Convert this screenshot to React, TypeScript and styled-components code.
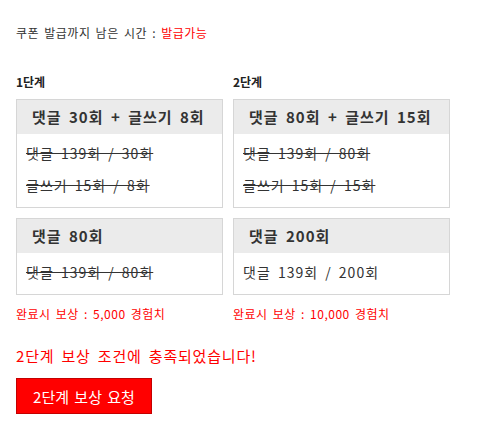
import styled, { createGlobalStyle } from "styled-components";

const GlobalStyle = createGlobalStyle`
  html, body {
    margin: 0;
    padding: 0;
    background: #fff;
  }
  body {
    font-family: "Noto Sans CJK KR", "Noto Sans", sans-serif;
    color: #333;
  }
`;

// ─── Styled components ────────────────────────────────────────────────────────

const Page = styled.main`
  padding: 25px 16px 20px;
`;

const Timer = styled.p`
  margin: 0;
  font-size: 12px;
  line-height: 16px;
  letter-spacing: 0.5px;
  word-spacing: 2px;
  color: #333;
`;

const Red = styled.span`
  color: #ff0000;
`;

const Steps = styled.div`
  display: grid;
  grid-template-columns: 207px 217px;
  column-gap: 10px;
  margin-top: 33px;
`;

const Step = styled.section`
  display: flex;
  flex-direction: column;
`;

const StepLabel = styled.h3`
  margin: 0 0 9px;
  font-size: 12px;
  line-height: 16px;
  font-weight: 700;
  color: #222;
`;

const Box = styled.div`
  border: 1px solid #d6d6d6;
  background: #fff;
  & + & { margin-top: 10px; }
`;

const BoxHead = styled.div`
  background: #ebebeb;
  height: 34px;
  line-height: 34px;
  padding: 0 15px;
  font-size: 15px;
  font-weight: 700;
  letter-spacing: 1px;
  word-spacing: 3px;
  color: #333;
  white-space: nowrap;
`;

const BoxBody = styled.div`
  padding: 3px 9px 6px;
`;

const Line = styled.p<{ $done?: boolean }>`
  margin: 0;
  font-size: 14px;
  line-height: 32px;
  letter-spacing: 1px;
  word-spacing: 3px;
  color: #333;
  white-space: nowrap;
  text-decoration: ${p => (p.$done ? "line-through" : "none")};
`;

const Reward = styled.p`
  margin: 11px 0 0;
  font-size: 12px;
  line-height: 16px;
  letter-spacing: 0.5px;
  word-spacing: 2px;
  color: #ff0000;
`;

const Notice = styled.p`
  margin: 24px 0 0;
  font-size: 15px;
  line-height: 20px;
  letter-spacing: 0.8px;
  word-spacing: 3px;
  color: #ff0000;
`;

const RequestBtn = styled.button`
  margin-top: 12px;
  width: 136px;
  height: 36px;
  padding: 0;
  border: 1px solid #c40000;
  background: #ff0000;
  color: #fff;
  font-family: "Noto Sans CJK KR", "Noto Sans", sans-serif;
  font-size: 15px;
  font-weight: 400;
  letter-spacing: 0;
  word-spacing: 2px;
  cursor: pointer;
`;

// ─── Data ─────────────────────────────────────────────────────────────────────

type Mission = { title: string; lines: { text: string; done: boolean }[] };

const steps: { label: string; reward: string; missions: Mission[] }[] = [
  {
    label: "1단계",
    reward: "완료시 보상 : 5,000 경험치",
    missions: [
      {
        title: "댓글 30회 + 글쓰기 8회",
        lines: [
          { text: "댓글 139회 / 30회", done: true },
          { text: "글쓰기 15회 / 8회", done: true },
        ],
      },
      {
        title: "댓글 80회",
        lines: [{ text: "댓글 139회 / 80회", done: true }],
      },
    ],
  },
  {
    label: "2단계",
    reward: "완료시 보상 : 10,000 경험치",
    missions: [
      {
        title: "댓글 80회 + 글쓰기 15회",
        lines: [
          { text: "댓글 139회 / 80회", done: true },
          { text: "글쓰기 15회 / 15회", done: true },
        ],
      },
      {
        title: "댓글 200회",
        lines: [{ text: "댓글 139회 / 200회", done: false }],
      },
    ],
  },
];

export default function App() {
  return (
    <>
      <GlobalStyle />
      <Page>
        <Timer>
          쿠폰 발급까지 남은 시간 : <Red>발급가능</Red>
        </Timer>

        <Steps>
          {steps.map(step => (
            <Step key={step.label}>
              <StepLabel>{step.label}</StepLabel>
              {step.missions.map(m => (
                <Box key={m.title}>
                  <BoxHead>{m.title}</BoxHead>
                  <BoxBody>
                    {m.lines.map(l => (
                      <Line key={l.text} $done={l.done}>{l.text}</Line>
                    ))}
                  </BoxBody>
                </Box>
              ))}
              <Reward>{step.reward}</Reward>
            </Step>
          ))}
        </Steps>

        <Notice>2단계 보상 조건에 충족되었습니다!</Notice>
        <RequestBtn>2단계 보상 요청</RequestBtn>
      </Page>
    </>
  );
}
